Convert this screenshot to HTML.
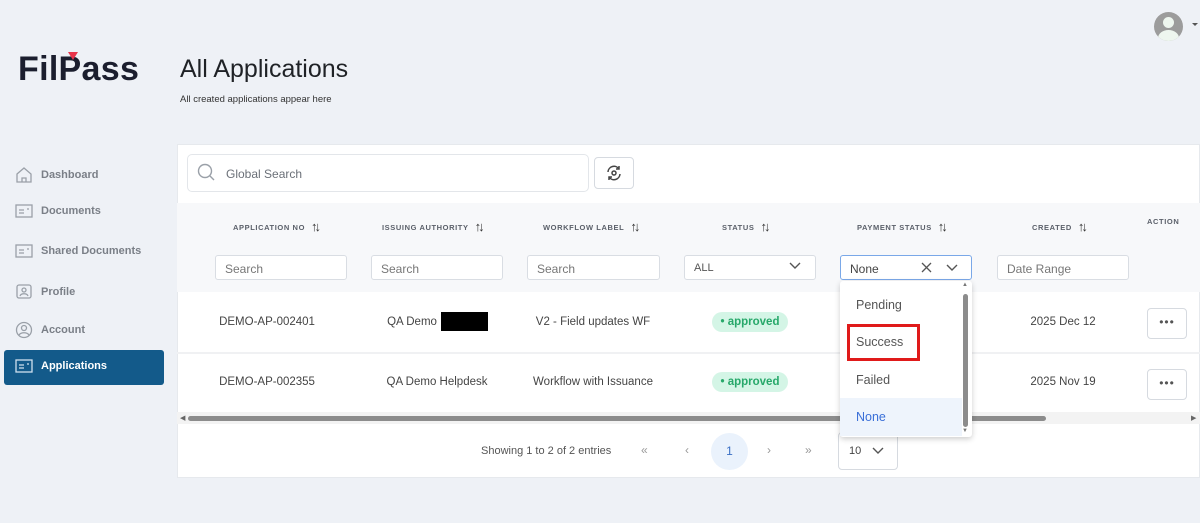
<!DOCTYPE html>
<html><head><meta charset="utf-8"><style>
*{box-sizing:border-box;margin:0;padding:0}
body{width:1200px;height:523px;background:#eef1f6;font-family:"Liberation Sans",sans-serif;position:relative;overflow:hidden;color:#333}
.a{position:absolute}
.nav{position:absolute;left:15px;font-size:11px;font-weight:bold;color:#7a7f87;display:flex;align-items:center}
.nav svg{margin-right:8px}
.th{position:absolute;top:219px;font-size:7.5px;font-weight:bold;letter-spacing:.6px;color:#5b606a;white-space:nowrap}
.th b{font-size:13px;margin-left:6px;color:#333;font-weight:bold;vertical-align:-1px;letter-spacing:-3px}
.inp{position:absolute;top:255px;height:25px;border:1px solid #d9dde3;border-radius:3px;background:#fff;font-size:12px;color:#777;padding:6px 9px}
.td{position:absolute;font-size:11.5px;color:#444;transform:translateX(-50%);white-space:nowrap}
.badge{position:absolute;width:76px;height:20px;border-radius:10px;background:#d4f5e6;color:#27a86a;font-size:11.5px;font-weight:bold;text-align:center;line-height:20px}
.dots{position:absolute;left:1147px;width:40px;height:31px;border:1px solid #d6dae0;border-radius:4px;background:#fff;text-align:center;font-size:12px;line-height:26px;color:#555;letter-spacing:1px}
.opt{position:absolute;left:856px;font-size:12.5px;color:#555}
.chev{position:absolute}
</style></head><body>
<div class="a" style="left:18px;top:50px;font-size:34px;font-weight:bold;color:#1b1e2e;letter-spacing:0.3px">FilPass</div>
<div class="a" style="left:68px;top:52px;width:0;height:0;border-left:5px solid transparent;border-right:5px solid transparent;border-top:8px solid #e8344b"></div>
<div class="a" style="left:180px;top:55px;font-size:25px;color:#1f2226">All Applications</div>
<div class="a" style="left:180px;top:94px;font-size:9.5px;color:#333">All created applications appear here</div>
<div class="a" style="left:1154px;top:12px;width:29px;height:29px;border-radius:50%;background:#9c9c9c;overflow:hidden">
 <div class="a" style="left:9px;top:5px;width:11px;height:11px;border-radius:50%;background:#eef6ef"></div>
 <div class="a" style="left:4px;top:18px;width:21px;height:16px;border-radius:50%;background:#eef6ef"></div></div>
<div class="a" style="left:1192px;top:23px;border-left:3px solid transparent;border-right:3px solid transparent;border-top:3px solid #555"></div>

<div class="nav" style="top:166px"><svg width="18" height="18" viewBox="0 0 18 18" fill="none" stroke="#9aa0a8" stroke-width="1.3"><path d="M2 8L9 2l7 6v8H2z"/><path d="M7 16v-4h4v4"/></svg>Dashboard</div>
<div class="nav" style="top:204px"><svg width="18" height="14" viewBox="0 0 18 14" fill="none" stroke="#9aa0a8" stroke-width="1.3"><rect x="1" y="1" width="16" height="12"/><path d="M4 6h5M4 9h5M12 5h2"/></svg>Documents</div>
<div class="nav" style="top:244px"><svg width="18" height="14" viewBox="0 0 18 14" fill="none" stroke="#9aa0a8" stroke-width="1.3"><rect x="1" y="1" width="16" height="12"/><path d="M4 6h5M4 9h5M12 5h2"/></svg>Shared Documents</div>
<div class="nav" style="top:283px"><svg width="18" height="18" viewBox="0 0 18 18" fill="none" stroke="#9aa0a8" stroke-width="1.3"><rect x="2" y="2" width="14" height="13" rx="2"/><circle cx="9" cy="7" r="2"/><path d="M5 13c1-3 7-3 8 0"/></svg>Profile</div>
<div class="nav" style="top:321px"><svg width="18" height="18" viewBox="0 0 18 18" fill="none" stroke="#9aa0a8" stroke-width="1.3"><circle cx="9" cy="9" r="7.5"/><circle cx="9" cy="7" r="2.5"/><path d="M4 14c2-3 8-3 10 0"/></svg>Account</div>
<div class="a" style="left:4px;top:350px;width:160px;height:35px;background:#135a8a;border-radius:3px"></div>
<div class="nav" style="top:359px;color:#fff"><svg width="18" height="14" viewBox="0 0 18 14" fill="none" stroke="#cfe0ee" stroke-width="1.3"><rect x="1" y="1" width="16" height="12"/><path d="M4 6h5M4 9h5M12 5h2"/></svg>Applications</div>

<div class="a" style="left:177px;top:144px;width:1023px;height:334px;background:#fff;border:1px solid #e6e9ed"></div>
<div class="a" style="left:177px;top:203px;width:1023px;height:89px;background:#f7f8fa"></div>
<div class="a" style="left:187px;top:154px;width:402px;height:38px;border:1px solid #e3e6ea;border-radius:5px;background:#fff"></div>
<svg class="a" style="left:197px;top:163px" width="18" height="18" viewBox="0 0 18 18" fill="none" stroke="#9aa0a8" stroke-width="1.4"><circle cx="8" cy="8" r="6.5"/><path d="M13 13l4 4"/></svg>
<div class="a" style="left:226px;top:167px;font-size:12px;color:#6b7078">Global Search</div>
<div class="a" style="left:594px;top:157px;width:40px;height:32px;border:1px solid #d6dae0;border-radius:4px;background:#fff"></div>
<svg class="a" style="left:605px;top:164px" width="18" height="18" viewBox="0 0 18 18" fill="none" stroke="#444" stroke-width="1.5"><path d="M3 8a6 6 0 0 1 11-3M15 10a6 6 0 0 1-11 3"/><path d="M14 2v3h-3M4 16v-3h3"/><circle cx="9" cy="9" r="2"/></svg>

<div class="th" style="left:233px">APPLICATION NO<b>↑↓</b></div>
<div class="th" style="left:382px">ISSUING AUTHORITY<b>↑↓</b></div>
<div class="th" style="left:543px">WORKFLOW LABEL<b>↑↓</b></div>
<div class="th" style="left:722px">STATUS<b>↑↓</b></div>
<div class="th" style="left:857px">PAYMENT STATUS<b>↑↓</b></div>
<div class="th" style="left:1032px">CREATED<b>↑↓</b></div>
<div class="th" style="left:1147px;top:217px">ACTION</div>

<div class="inp" style="left:215px;width:132px">Search</div>
<div class="inp" style="left:371px;width:132px">Search</div>
<div class="inp" style="left:527px;width:133px">Search</div>
<div class="inp" style="left:684px;width:132px;font-size:11px;color:#555">ALL</div>
<svg class="chev" style="left:789px;top:262px" width="12" height="8" viewBox="0 0 12 8" fill="none" stroke="#555" stroke-width="1.4"><path d="M1 1l5 5 5-5"/></svg>
<div class="inp" style="left:840px;width:132px;border-color:#7aa8e8;color:#444">None</div>
<svg class="chev" style="left:921px;top:262px" width="11" height="11" viewBox="0 0 11 11" fill="none" stroke="#555" stroke-width="1.3"><path d="M1 1l9 9M10 1l-9 9"/></svg>
<svg class="chev" style="left:946px;top:264px" width="12" height="8" viewBox="0 0 12 8" fill="none" stroke="#555" stroke-width="1.4"><path d="M1 1l5 5 5-5"/></svg>
<div class="inp" style="left:997px;width:132px">Date Range</div>

<div class="a" style="left:177px;top:352px;width:1023px;height:2px;background:#f0f1f3"></div>
<div class="td" style="left:267px;top:316px">DEMO-AP-002401</div>
<div class="td" style="left:412px;top:316px">QA Demo</div>
<div class="a" style="left:441px;top:312px;width:47px;height:19px;background:#000"></div>
<div class="td" style="left:593px;top:316px">V2 - Field updates WF</div>
<div class="badge" style="left:712px;top:312px">• approved</div>
<div class="td" style="left:1063px;top:316px">2025 Dec 12</div>
<div class="dots" style="top:308px">•••</div>

<div class="td" style="left:267px;top:376px">DEMO-AP-002355</div>
<div class="td" style="left:437px;top:376px">QA Demo Helpdesk</div>
<div class="td" style="left:593px;top:376px">Workflow with Issuance</div>
<div class="badge" style="left:712px;top:372px">• approved</div>
<div class="td" style="left:1063px;top:376px">2025 Nov 19</div>
<div class="dots" style="top:369px">•••</div>

<div class="a" style="left:177px;top:412px;width:1023px;height:12px;background:#f3f3f3"></div>
<div class="a" style="left:188px;top:416px;width:858px;height:5px;background:#8c8c8c;border-radius:3px"></div>
<div class="a" style="left:180px;top:414px;font-size:7px;color:#666">◀</div>
<div class="a" style="left:1191px;top:414px;font-size:7px;color:#666">▶</div>

<div class="a" style="left:481px;top:445px;font-size:11px;color:#555">Showing 1 to 2 of 2 entries</div>
<div class="a" style="left:641px;top:443px;font-size:12px;color:#999">«</div>
<div class="a" style="left:685px;top:443px;font-size:12px;color:#999">‹</div>
<div class="a" style="left:711px;top:433px;width:37px;height:37px;border-radius:50%;background:#eaf2fc;color:#3a6fc4;font-size:12px;text-align:center;line-height:37px">1</div>
<div class="a" style="left:767px;top:443px;font-size:12px;color:#999">›</div>
<div class="a" style="left:805px;top:443px;font-size:12px;color:#999">»</div>
<div class="a" style="left:838px;top:432px;width:60px;height:38px;border:1px solid #d6dae0;border-radius:4px;background:#fff;font-size:11px;color:#444;padding:12px 10px">10</div>
<svg class="chev" style="left:872px;top:447px" width="12" height="8" viewBox="0 0 12 8" fill="none" stroke="#555" stroke-width="1.4"><path d="M1 1l5 5 5-5"/></svg>

<div class="a" style="left:840px;top:281px;width:132px;height:156px;background:#fff;border-radius:3px;box-shadow:0 2px 6px rgba(0,0,0,.2)"></div>
<div class="a" style="left:840px;top:398px;width:122px;height:38px;background:#eef4fc"></div>
<div class="a" style="left:963px;top:294px;width:5px;height:133px;background:#8c8c8c;border-radius:3px"></div>
<div class="a" style="left:962px;top:282px;font-size:6px;color:#777">▲</div>
<div class="a" style="left:962px;top:428px;font-size:6px;color:#777">▼</div>
<div class="opt" style="top:298px">Pending</div>
<div class="opt" style="top:335px">Success</div>
<div class="opt" style="top:373px">Failed</div>
<div class="opt" style="top:410px;color:#3a6fd8">None</div>
<div class="a" style="left:847px;top:324px;width:73px;height:37px;border:3px solid #e01a1a"></div>
</body></html>
